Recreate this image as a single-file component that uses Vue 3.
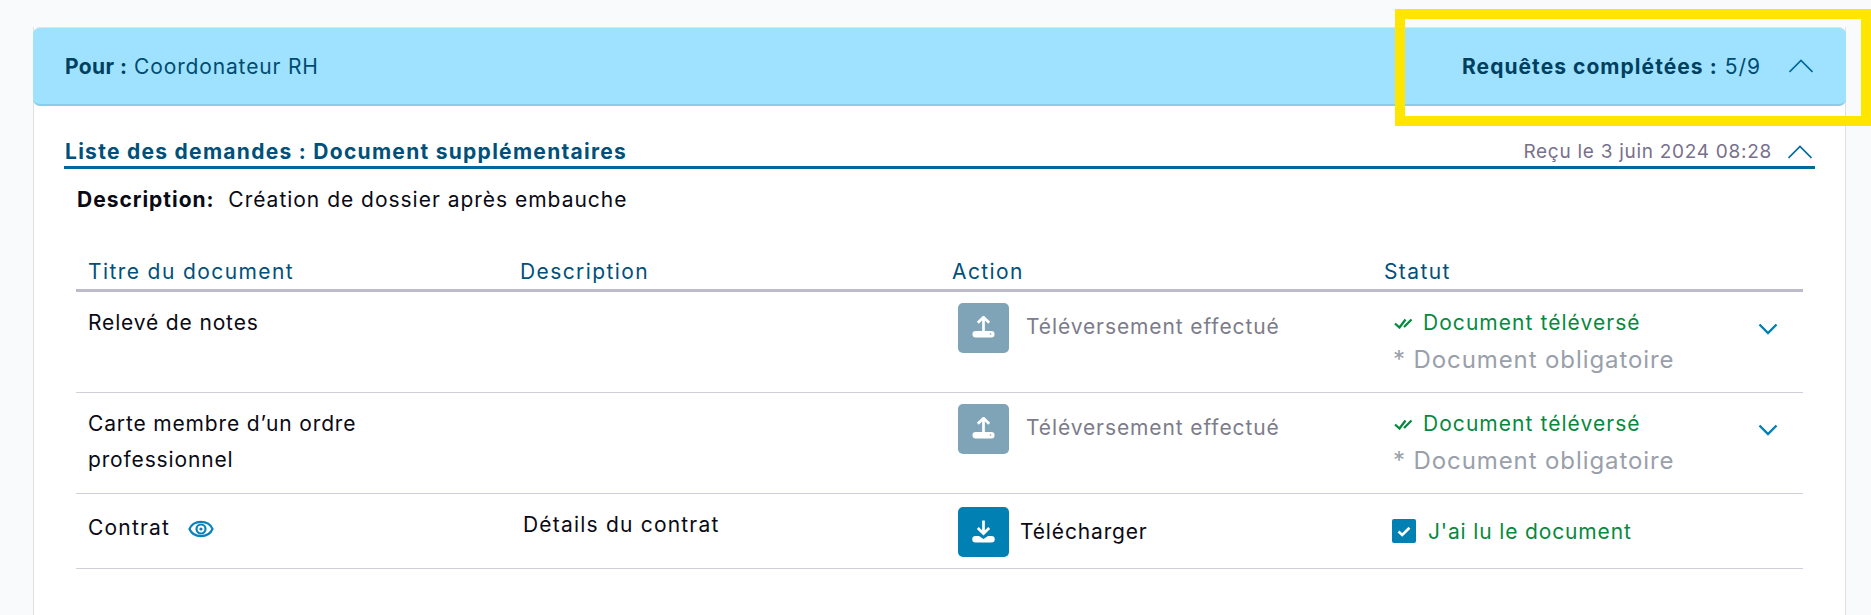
<script setup>
const rows = [
  { title: 'Relevé de notes', done: true },
  { title: 'Carte membre d’un ordre professionnel', done: true },
]
</script>

<template>
  <div class="page">
    <div class="card">
      <div class="card-head">
        <div><b>Pour :</b> Coordonateur RH</div>
        <div class="head-right">
          <span class="count"><b>Requêtes complétées :</b> 5/9</span>
          <svg class="chev-up" width="24" height="14" viewBox="0 0 24 14"><path d="M0.5 13 L12 1.5 L23.5 13" /></svg>
        </div>
      </div>

      <div class="card-body">
        <div class="list-title">
          <h2>Liste des demandes : Document supplémentaires</h2>
          <div class="received">
            <span>Reçu le 3 juin 2024 08:28</span>
            <svg class="chev-up" width="24" height="14" viewBox="0 0 24 14"><path d="M0.5 13 L12 1.5 L23.5 13" /></svg>
          </div>
        </div>
        <p class="desc"><b>Description:</b>&nbsp; Création de dossier après embauche</p>

        <div class="table">
          <div class="row head">
            <div>Titre du document</div>
            <div>Description</div>
            <div>Action</div>
            <div>Statut</div>
          </div>

          <div v-for="r in rows" :key="r.title" class="row doc">
            <div class="title-cell">{{ r.title }}</div>
            <div></div>
            <div class="action">
              <span class="icon-btn off">
                <svg width="24" height="24" viewBox="0 0 24 24">
                  <path class="ico-line" d="M5.8 6.8 L11.5 1.2 L17.2 6.8 M11.5 2 V15" />
                  <rect class="ico-fill" x="0.5" y="15" width="22" height="6.5" rx="3" />
                  <circle cx="18.5" cy="18" r="0.8" fill="#7fa3b7" />
                </svg>
              </span>
              <span class="done-label">Téléversement effectué</span>
            </div>
            <div class="status">
              <div class="uploaded">
                <svg width="19" height="11" viewBox="0 0 19 11"><path d="M1 5.5 L5.5 9.5 L11.5 1.5 M10 9 L17.5 1.5" /></svg>
                Document téléversé
              </div>
              <div class="required">* Document obligatoire</div>
              <svg class="chev-down" width="20" height="12" viewBox="0 0 20 12"><path d="M1.5 1.5 L10 10 L18.5 1.5" /></svg>
            </div>
          </div>

          <div class="row doc last">
            <div class="contract">
              Contrat
              <svg width="26" height="18" viewBox="0 0 26 18">
                <path d="M1.5 9 C5.5 -0.5 20.5 -0.5 24.5 9 C20.5 18.5 5.5 18.5 1.5 9 Z" />
                <circle cx="13" cy="9" r="4.5" />
                <circle class="pupil" cx="13" cy="9" r="1.6" />
              </svg>
            </div>
            <div class="details">Détails du contrat</div>
            <div class="action dl">
              <span class="icon-btn">
                <svg width="24" height="24" viewBox="0 0 24 24">
                  <path class="ico-line" d="M5.8 8 L11.5 13.5 L17.2 8 M11.5 0.5 V13" />
                  <path class="ico-fill" d="M3.5 16 H7 L11.5 19 L16 16 H19.5 A3 3 0 0 1 19.5 22.5 H3.5 A3 3 0 0 1 3.5 16 Z" />
                </svg>
              </span>
              <span>Télécharger</span>
            </div>
            <div class="read">
              <span class="box">
                <svg width="14" height="11" viewBox="0 0 14 11"><path d="M1.5 5.5 L5.2 9 L12.5 1.8" /></svg>
              </span>
              J'ai lu le document
            </div>
          </div>
        </div>
      </div>
    </div>
    <div class="highlight"></div>
  </div>
</template>

<style>
html, body { background: #f9fafc; }
</style>

<style scoped>
.page {
  position: relative;
  box-sizing: border-box;
  height: 615px;
  overflow: hidden;
  padding: 27px 25px 0 33px;
  background: #f9fafc;
  font-family: Inter, "Liberation Sans", sans-serif;
  font-size: 21px;
  letter-spacing: 0.85px;
  color: #0a0a14;
}
.card {
  min-height: 600px;
  background: #fff;
  border-left: 1px solid #e0e0e6;
  border-right: 1px solid #e0e0e6;
}
.card-head {
  display: flex;
  align-items: center;
  justify-content: space-between;
  box-sizing: border-box;
  height: 79px;
  margin: 0 -1px;
  padding: 0 33px 0 32px;
  background: #9fe2ff;
  border-bottom: 2px solid #8accea;
  border-top: 1px solid #dfe3e6;
  border-radius: 7px;
  color: #004c70;
}
.card-head b { color: #00405f; letter-spacing: 0.4px; }
.head-right {
  display: flex;
  align-items: center;
  gap: 28px;
  letter-spacing: 1px;
}
.head-right b { letter-spacing: 1.05px; }
.chev-up path {
  fill: none;
  stroke: #00699b;
  stroke-width: 1.7;
}
.card-body { padding: 0 30px; }
.list-title {
  display: flex;
  align-items: flex-end;
  justify-content: space-between;
  height: 63px;
  box-sizing: border-box;
  border-bottom: 3px solid #006a9e;
}
.list-title h2 {
  margin: 0;
  padding-left: 1px;
  font-size: 21px;
  font-weight: 700;
  letter-spacing: 1.28px;
  color: #00507a;
  line-height: 28px;
}
.received {
  display: flex;
  align-items: center;
  gap: 16px;
  margin-right: 3px;
  color: #78708c;
  font-size: 19px;
  letter-spacing: 0.72px;
  line-height: 28px;
}
.desc {
  margin: 17px 0 0 13px;
  line-height: 28px;
  letter-spacing: 0.98px;
}
.table { margin: 32px 12px 0 12px; }
.row {
  display: grid;
  grid-template-columns: repeat(4, 432px);
}
.row > div { padding-left: 12px; }
.row.head {
  height: 46px;
  align-items: end;
  box-sizing: border-box;
  padding-bottom: 3px;
  border-bottom: 3px solid #bdbbca;
  color: #00507a;
  letter-spacing: 1.4px;
  line-height: 28px;
}
.row.doc {
  height: 101px;
  box-sizing: border-box;
  border-bottom: 1px solid #d0cfdb;
}
.row.last { height: 75px; }
.title-cell {
  padding-top: 13px;
  width: 330px;
  line-height: 36px;
}
.action {
  display: flex;
  align-items: flex-start;
  gap: 17px;
  padding-top: 11px;
  margin-left: 6px;
}
.icon-btn {
  display: flex;
  align-items: center;
  justify-content: center;
  flex: none;
  width: 51px;
  height: 50px;
  border-radius: 5px;
  background: #0080b3;
}
.icon-btn.off { background: #7fa3b7; }
.ico-line {
  fill: none;
  stroke: #fff;
  stroke-width: 2.7;
}
.ico-fill { fill: #fff; }
.done-label {
  color: #7c7c8a;
  line-height: 30px;
  margin-top: 9px;
  letter-spacing: 0.9px;
}
.status { position: relative; padding-top: 15px; }
.uploaded {
  display: flex;
  align-items: center;
  gap: 10px;
  margin-left: 10px;
  color: #06893e;
  line-height: 32px;
  letter-spacing: 1.05px;
}
.uploaded path {
  fill: none;
  stroke: #06893e;
  stroke-width: 2.3;
}
.required {
  margin-left: 9px;
  color: #9aa0aa;
  font-size: 24px;
  line-height: 42px;
  letter-spacing: 0.9px;
}
.chev-down {
  position: absolute;
  top: 31px;
  right: 26px;
}
.chev-down path {
  fill: none;
  stroke: #0080b3;
  stroke-width: 2.4;
}
.contract {
  display: flex;
  align-items: flex-start;
  gap: 18px;
  padding-top: 19px;
  line-height: 30px;
  letter-spacing: 1.2px;
}
.contract svg { margin-top: 7px; }
.contract path, .contract circle {
  fill: none;
  stroke: #0b83b8;
  stroke-width: 2.2;
}
.contract .pupil { fill: #0b83b8; stroke: none; }
.details {
  padding-top: 16px;
  line-height: 30px;
  margin-left: 3px;
  letter-spacing: 1.2px;
}
.action.dl {
  gap: 11px;
  align-items: center;
  padding-top: 12px;
  padding-bottom: 11px;
}
.read {
  display: flex;
  align-items: center;
  gap: 12px;
  margin-left: 8px;
  color: #06893e;
}
.box {
  display: flex;
  align-items: center;
  justify-content: center;
  width: 24px;
  height: 24px;
  border-radius: 2px;
  background: #0080b3;
}
.box path {
  fill: none;
  stroke: #fff;
  stroke-width: 2.6;
}
.highlight {
  position: absolute;
  left: 1395px;
  top: 9px;
  width: 476px;
  height: 117px;
  box-sizing: border-box;
  border: 10px solid #ffe600;
}
</style>
